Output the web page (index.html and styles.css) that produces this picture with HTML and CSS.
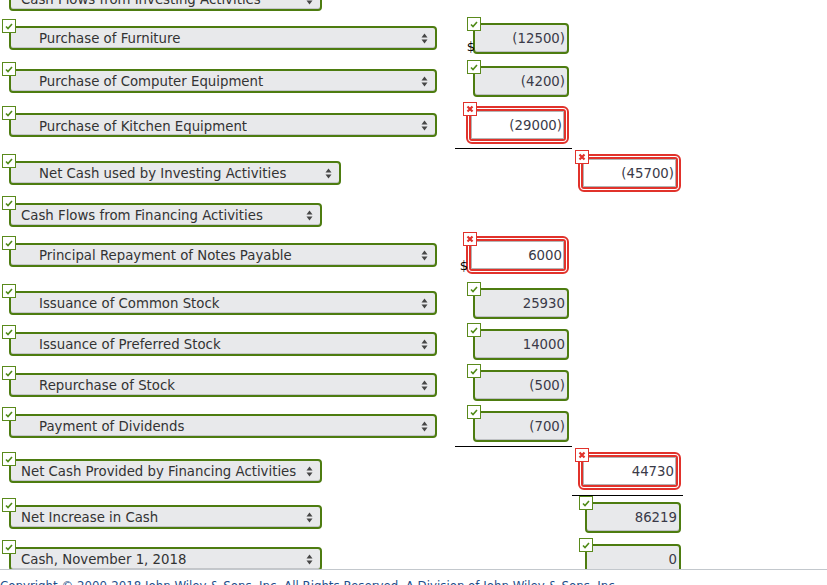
FILE: index.html
```html
<!DOCTYPE html>
<html>
<head>
<meta charset="utf-8">
<title>Statement of Cash Flows</title>
<link rel="stylesheet" href="styles.css">
</head>
<body>
<div class="sheet">

  <div class="row">
    <div class="label">
      <div class="sel narrow pad-s">Cash Flows from Investing Activities<svg class="arrows" viewBox="0 0 7 11"><polygon points="0.5,4.5 3.5,0.5 6.5,4.5"/><polygon points="0.5,6.5 3.5,10.5 6.5,6.5"/></svg></div>
    </div>
    <div class="amt"></div>
    <div class="tot"></div>
  </div>

  <div class="row mt1">
    <div class="label">
      <div class="sel wide pad-l"><span class="mark ok"><svg viewBox="0 0 12 12"><polyline points="3,6.5 5,8.5 9,4"/></svg></span>Purchase of Furniture<svg class="arrows" viewBox="0 0 7 11"><polygon points="0.5,4.5 3.5,0.5 6.5,4.5"/><polygon points="0.5,6.5 3.5,10.5 6.5,6.5"/></svg></div>
    </div>
    <div class="amt">
      <div class="field"><span class="mark ok"><svg viewBox="0 0 12 12"><polyline points="3,6.5 5,8.5 9,4"/></svg></span><span class="dollar">$</span>(12500)</div>
    </div>
    <div class="tot"></div>
  </div>

  <div class="row mt5">
    <div class="label">
      <div class="sel wide pad-l"><span class="mark ok"><svg viewBox="0 0 12 12"><polyline points="3,6.5 5,8.5 9,4"/></svg></span>Purchase of Computer Equipment<svg class="arrows" viewBox="0 0 7 11"><polygon points="0.5,4.5 3.5,0.5 6.5,4.5"/><polygon points="0.5,6.5 3.5,10.5 6.5,6.5"/></svg></div>
    </div>
    <div class="amt">
      <div class="field"><span class="mark ok"><svg viewBox="0 0 12 12"><polyline points="3,6.5 5,8.5 9,4"/></svg></span>(4200)</div>
    </div>
    <div class="tot"></div>
  </div>

  <div class="row mt6">
    <div class="label">
      <div class="sel wide pad-l low"><span class="mark ok"><svg viewBox="0 0 12 12"><polyline points="3,6.5 5,8.5 9,4"/></svg></span><span class="clip">Purchase of Kitchen Equipment</span><svg class="arrows" viewBox="0 0 7 11"><polygon points="0.5,4.5 3.5,0.5 6.5,4.5"/><polygon points="0.5,6.5 3.5,10.5 6.5,6.5"/></svg></div>
    </div>
    <div class="amt">
      <div class="bad"><span class="mark no"><svg viewBox="0 0 12 12"><path d="M3.5,3.5 L8.5,8.5 M8.5,3.5 L3.5,8.5"/></svg></span><div class="bad-in"><div class="bad-field">(29000)</div></div></div>
    </div>
    <div class="tot"></div>
  </div>

  <div class="rule rule-amt mt4"></div>

  <div class="row mt5">
    <div class="label">
      <div class="sel mid pad-l"><span class="mark ok"><svg viewBox="0 0 12 12"><polyline points="3,6.5 5,8.5 9,4"/></svg></span>Net Cash used by Investing Activities<svg class="arrows" viewBox="0 0 7 11"><polygon points="0.5,4.5 3.5,0.5 6.5,4.5"/><polygon points="0.5,6.5 3.5,10.5 6.5,6.5"/></svg></div>
    </div>
    <div class="amt"></div>
    <div class="tot">
      <div class="bad"><span class="mark no"><svg viewBox="0 0 12 12"><path d="M3.5,3.5 L8.5,8.5 M8.5,3.5 L3.5,8.5"/></svg></span><div class="bad-in"><div class="bad-field">(45700)</div></div></div>
    </div>
  </div>

  <div class="row mt4">
    <div class="label">
      <div class="sel narrow pad-s"><span class="mark ok"><svg viewBox="0 0 12 12"><polyline points="3,6.5 5,8.5 9,4"/></svg></span>Cash Flows from Financing Activities<svg class="arrows" viewBox="0 0 7 11"><polygon points="0.5,4.5 3.5,0.5 6.5,4.5"/><polygon points="0.5,6.5 3.5,10.5 6.5,6.5"/></svg></div>
    </div>
    <div class="amt"></div>
    <div class="tot"></div>
  </div>

  <div class="row mt2">
    <div class="label">
      <div class="sel wide pad-l"><span class="mark ok"><svg viewBox="0 0 12 12"><polyline points="3,6.5 5,8.5 9,4"/></svg></span>Principal Repayment of Notes Payable<svg class="arrows" viewBox="0 0 7 11"><polygon points="0.5,4.5 3.5,0.5 6.5,4.5"/><polygon points="0.5,6.5 3.5,10.5 6.5,6.5"/></svg></div>
    </div>
    <div class="amt">
      <div class="bad"><span class="mark no"><svg viewBox="0 0 12 12"><path d="M3.5,3.5 L8.5,8.5 M8.5,3.5 L3.5,8.5"/></svg></span><span class="dollar">$</span><div class="bad-in"><div class="bad-field">6000</div></div></div>
    </div>
    <div class="tot"></div>
  </div>

  <div class="row mt10">
    <div class="label">
      <div class="sel wide pad-l"><span class="mark ok"><svg viewBox="0 0 12 12"><polyline points="3,6.5 5,8.5 9,4"/></svg></span>Issuance of Common Stock<svg class="arrows" viewBox="0 0 7 11"><polygon points="0.5,4.5 3.5,0.5 6.5,4.5"/><polygon points="0.5,6.5 3.5,10.5 6.5,6.5"/></svg></div>
    </div>
    <div class="amt">
      <div class="field"><span class="mark ok"><svg viewBox="0 0 12 12"><polyline points="3,6.5 5,8.5 9,4"/></svg></span>25930</div>
    </div>
    <div class="tot"></div>
  </div>

  <div class="row mt3">
    <div class="label">
      <div class="sel wide pad-l"><span class="mark ok"><svg viewBox="0 0 12 12"><polyline points="3,6.5 5,8.5 9,4"/></svg></span>Issuance of Preferred Stock<svg class="arrows" viewBox="0 0 7 11"><polygon points="0.5,4.5 3.5,0.5 6.5,4.5"/><polygon points="0.5,6.5 3.5,10.5 6.5,6.5"/></svg></div>
    </div>
    <div class="amt">
      <div class="field"><span class="mark ok"><svg viewBox="0 0 12 12"><polyline points="3,6.5 5,8.5 9,4"/></svg></span>14000</div>
    </div>
    <div class="tot"></div>
  </div>

  <div class="row mt3">
    <div class="label">
      <div class="sel wide pad-l"><span class="mark ok"><svg viewBox="0 0 12 12"><polyline points="3,6.5 5,8.5 9,4"/></svg></span>Repurchase of Stock<svg class="arrows" viewBox="0 0 7 11"><polygon points="0.5,4.5 3.5,0.5 6.5,4.5"/><polygon points="0.5,6.5 3.5,10.5 6.5,6.5"/></svg></div>
    </div>
    <div class="amt">
      <div class="field"><span class="mark ok"><svg viewBox="0 0 12 12"><polyline points="3,6.5 5,8.5 9,4"/></svg></span>(500)</div>
    </div>
    <div class="tot"></div>
  </div>

  <div class="row mt3">
    <div class="label">
      <div class="sel wide pad-l"><span class="mark ok"><svg viewBox="0 0 12 12"><polyline points="3,6.5 5,8.5 9,4"/></svg></span>Payment of Dividends<svg class="arrows" viewBox="0 0 7 11"><polygon points="0.5,4.5 3.5,0.5 6.5,4.5"/><polygon points="0.5,6.5 3.5,10.5 6.5,6.5"/></svg></div>
    </div>
    <div class="amt">
      <div class="field"><span class="mark ok"><svg viewBox="0 0 12 12"><polyline points="3,6.5 5,8.5 9,4"/></svg></span>(700)</div>
    </div>
    <div class="tot"></div>
  </div>

  <div class="rule rule-amt mt1"></div>

  <div class="row mt5">
    <div class="label">
      <div class="sel narrow pad-s"><span class="mark ok"><svg viewBox="0 0 12 12"><polyline points="3,6.5 5,8.5 9,4"/></svg></span>Net Cash Provided by Financing Activities<svg class="arrows" viewBox="0 0 7 11"><polygon points="0.5,4.5 3.5,0.5 6.5,4.5"/><polygon points="0.5,6.5 3.5,10.5 6.5,6.5"/></svg></div>
    </div>
    <div class="amt"></div>
    <div class="tot">
      <div class="bad"><span class="mark no"><svg viewBox="0 0 12 12"><path d="M3.5,3.5 L8.5,8.5 M8.5,3.5 L3.5,8.5"/></svg></span><div class="bad-in"><div class="bad-field">44730</div></div></div>
    </div>
  </div>

  <div class="rule rule-tot mt5"></div>

  <div class="row mt2">
    <div class="label">
      <div class="sel narrow pad-s"><span class="mark ok"><svg viewBox="0 0 12 12"><polyline points="3,6.5 5,8.5 9,4"/></svg></span>Net Increase in Cash<svg class="arrows" viewBox="0 0 7 11"><polygon points="0.5,4.5 3.5,0.5 6.5,4.5"/><polygon points="0.5,6.5 3.5,10.5 6.5,6.5"/></svg></div>
    </div>
    <div class="amt"></div>
    <div class="tot">
      <div class="field"><span class="mark ok"><svg viewBox="0 0 12 12"><polyline points="3,6.5 5,8.5 9,4"/></svg></span>86219</div>
    </div>
  </div>

  <div class="row mt4">
    <div class="label">
      <div class="sel narrow pad-s"><span class="mark ok"><svg viewBox="0 0 12 12"><polyline points="3,6.5 5,8.5 9,4"/></svg></span>Cash, November 1, 2018<svg class="arrows" viewBox="0 0 7 11"><polygon points="0.5,4.5 3.5,0.5 6.5,4.5"/><polygon points="0.5,6.5 3.5,10.5 6.5,6.5"/></svg></div>
    </div>
    <div class="amt"></div>
    <div class="tot">
      <div class="field"><span class="mark ok"><svg viewBox="0 0 12 12"><polyline points="3,6.5 5,8.5 9,4"/></svg></span>0</div>
    </div>
  </div>

</div>

<footer class="footer">
  <span class="footer-text">Copyright © 2000-2018 John Wiley &amp; Sons, Inc. All Rights Reserved. A Division of John Wiley &amp; Sons, Inc.</span>
</footer>
</body>
</html>
```

FILE: styles.css
```css
html, body {
  margin: 0;
  padding: 0;
  background: #ffffff;
}

body {
  font-family: "DejaVu Sans", Verdana, sans-serif;
  font-size: 13.3px;
  color: #333333;
  overflow: hidden;
}

.sheet {
  margin-top: -20px;
  width: 700px;
}

.row {
  display: grid;
  grid-template-columns: 455px 117px 111px;
  height: 38px;
  align-items: center;
}

.mt1 { margin-top: 1px; }
.mt2 { margin-top: 2px; }
.mt3 { margin-top: 3px; }
.mt4 { margin-top: 4px; }
.mt5 { margin-top: 5px; }
.mt6 { margin-top: 6px; }
.mt10 { margin-top: 10px; }

.label {
  padding-left: 9px;
}

.amt {
  display: flex;
  justify-content: flex-end;
  padding-right: 3px;
}

.tot {
  display: flex;
  justify-content: flex-end;
  padding-right: 2px;
}

/* select look-alike */
.sel {
  position: relative;
  box-sizing: border-box;
  height: 24px;
  border: 2px solid #4d7c10;
  border-radius: 4px;
  background: #e8e9eb;
  box-shadow: inset 0 -1px 0 #c4c6c9;
  line-height: 21px;
  white-space: nowrap;
  color: #333333;
}

.sel.wide { width: 428px; }
.sel.mid { width: 332px; }
.sel.narrow { width: 313px; }

.pad-l { padding-left: 28px; }
.pad-s { padding-left: 10px; }

.clip {
  display: inline-block;
  height: 20px;
  overflow: hidden;
  vertical-align: top;
  line-height: 23px;
}

.arrows {
  position: absolute;
  right: 7px;
  top: 5px;
  width: 7px;
  height: 11px;
  fill: #464646;
}

/* result marks */
.mark {
  position: absolute;
  left: -8px;
  top: -8px;
  width: 14px;
  height: 14px;
  box-sizing: border-box;
  background: #ffffff;
  z-index: 2;
  display: block;
}

.mark svg {
  display: block;
  width: 12px;
  height: 12px;
}

.mark.ok {
  border: 1px solid #5a8a1c;
}

.mark.ok polyline {
  fill: none;
  stroke: #4f8a16;
  stroke-width: 1.6;
}

.mark.no {
  border: 1px solid #e1322b;
}

.mark.no path {
  fill: none;
  stroke: #e1322b;
  stroke-width: 2.2;
}

.sel .mark {
  left: -9px;
  top: -9px;
}

.bad .mark {
  left: -5px;
  top: -6px;
}

/* amount fields */
.field {
  position: relative;
  box-sizing: border-box;
  width: 96px;
  height: 31px;
  border: 2px solid #4d7c10;
  border-radius: 4px;
  background: #e8e9eb;
  box-shadow: inset 0 -1px 0 #bfc1c4;
  text-align: right;
  padding-right: 2px;
  line-height: 27px;
  color: #3a3a48;
}

.bad {
  position: relative;
  box-sizing: border-box;
  width: 103px;
  height: 38px;
  border: 2px solid #e1322b;
  border-radius: 6px;
  padding: 1px;
  background: #ffffff;
}

.bad-in {
  box-sizing: border-box;
  height: 100%;
  border: 2px solid #e1322b;
  border-radius: 3px;
}

.bad-field {
  box-sizing: border-box;
  height: 100%;
  border: 1px solid #b4b4b4;
  background: #ffffff;
  text-align: right;
  padding-right: 1px;
  line-height: 28px;
  color: #3a3a48;
  overflow: hidden;
}

.dollar {
  position: absolute;
  right: 100%;
  bottom: -2px;
  color: #000000;
  font-size: 13px;
  line-height: 15px;
}

.bad .dollar {
  bottom: -1px;
}

/* underline rules */
.rule {
  height: 0;
  border-top: 1px solid #000000;
}

.rule-amt {
  margin-left: 455px;
  width: 117px;
}

.rule-tot {
  margin-left: 572px;
  width: 111px;
}

/* footer */
.footer {
  position: fixed;
  left: 0;
  right: 0;
  bottom: 0;
  height: 15px;
  border-top: 1px solid #c3c8cd;
  background: #ffffff;
  overflow: hidden;
  z-index: 5;
}

.footer-text {
  display: block;
  padding-top: 10px;
  padding-left: 0;
  white-space: nowrap;
  color: #1f4f8c;
  font-size: 11.8px;
  line-height: 13px;
}
```
